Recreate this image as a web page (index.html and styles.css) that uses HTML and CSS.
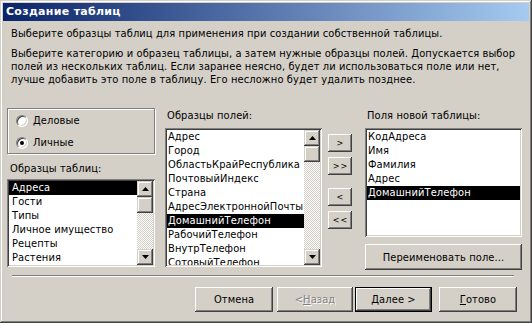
FILE: index.html
```html
<!DOCTYPE html>
<html lang="ru">
<head>
<meta charset="utf-8">
<title>Создание таблиц</title>
<link rel="stylesheet" href="styles.css">
</head>
<body>
<div class="window">
  <div class="titlebar">Создание таблиц</div>
  <p class="intro">Выберите образцы таблиц для применения при создании собственной таблицы.</p>
  <p class="desc"><span>Выберите категорию и образец таблицы, а затем нужные образцы полей. Допускается выбор</span><span>полей из нескольких таблиц. Если заранее неясно, будет ли использоваться поле или нет,</span><span>лучше добавить это поле в таблицу. Его несложно будет удалить позднее.</span></p>
  <div class="main">
    <div class="col col1">
      <div class="groupbox">
        <label class="radio-row"><span class="radio"></span>Деловые</label>
        <label class="radio-row"><span class="radio checked"></span>Личные</label>
      </div>
      <div class="label label1">Образцы таблиц:</div>
      <div class="listbox list1">
        <ul class="items">
          <li class="sel">Адреса</li>
          <li>Гости</li>
          <li>Типы</li>
          <li>Личное имущество</li>
          <li>Рецепты</li>
          <li>Растения</li>
        </ul>
        <div class="scrollbar">
          <div class="sbtn"><svg width="7" height="4" viewBox="0 0 7 4"><polygon points="3.5,0 7,4 0,4" fill="#000"/></svg></div>
          <div class="sbtn thumb"></div>
          <div class="track"></div>
          <div class="sbtn"><svg width="7" height="4" viewBox="0 0 7 4"><polygon points="0,0 7,0 3.5,4" fill="#000"/></svg></div>
        </div>
      </div>
    </div>
    <div class="col col2">
      <div class="label">Образцы полей:</div>
      <div class="listbox list2">
        <ul class="items">
          <li>Адрес</li>
          <li>Город</li>
          <li>ОбластьКрайРеспублика</li>
          <li>ПочтовыйИндекс</li>
          <li>Страна</li>
          <li>АдресЭлектроннойПочты</li>
          <li class="sel">ДомашнийТелефон</li>
          <li>РабочийТелефон</li>
          <li>ВнутрТелефон</li>
          <li>СотовыйТелефон</li>
        </ul>
        <div class="scrollbar">
          <div class="sbtn"><svg width="7" height="4" viewBox="0 0 7 4"><polygon points="3.5,0 7,4 0,4" fill="#000"/></svg></div>
          <div class="sbtn thumb"></div>
          <div class="track"></div>
          <div class="sbtn"><svg width="7" height="4" viewBox="0 0 7 4"><polygon points="0,0 7,0 3.5,4" fill="#000"/></svg></div>
        </div>
      </div>
    </div>
    <div class="col arrows">
      <button class="btn mini b1">&gt;</button>
      <button class="btn mini b2">&gt;&gt;</button>
      <button class="btn mini b3">&lt;</button>
      <button class="btn mini b4">&lt;&lt;</button>
    </div>
    <div class="col col3">
      <div class="label">Поля новой таблицы:</div>
      <div class="listbox list3">
        <ul class="items">
          <li>КодАдреса</li>
          <li>Имя</li>
          <li>Фамилия</li>
          <li>Адрес</li>
          <li class="sel">ДомашнийТелефон</li>
        </ul>
      </div>
      <button class="btn rename">Переименовать поле...</button>
    </div>
  </div>
  <div class="separator"></div>
  <div class="footer">
    <button class="btn fbtn cancel">Отмена</button>
    <button class="btn fbtn back disabled">&lt; <u>Н</u>азад</button>
    <button class="btn fbtn next default"><u>Д</u>алее &gt;</button>
    <button class="btn fbtn finish"><u>Г</u>отово</button>
  </div>
</div>
</body>
</html>
```
FILE: styles.css
```css
* { box-sizing: border-box; }
html, body { margin: 0; padding: 0; background: #d4d0c8; }
body {
  font-family: "DejaVu Sans Condensed", "DejaVu Sans", sans-serif;
  font-size: 11px;
  letter-spacing: 0.1px;
  color: #000;
}
.window {
  width: 532px;
  height: 323px;
  padding: 3px;
  background: #d4d0c8;
  box-shadow: inset -1px -1px #404040, inset 1px 1px #d4d0c8, inset -2px -2px #808080, inset 2px 2px #fff;
  display: flex;
  flex-direction: column;
  overflow: hidden;
}
.titlebar {
  height: 18px;
  line-height: 18px;
  padding-left: 3px;
  background: linear-gradient(to right, #0a246a, #a6caf0);
  color: #fff;
  font-family: "DejaVu Sans", sans-serif;
  font-weight: bold;
  font-size: 11px;
  letter-spacing: 0.3px;
  flex: none;
}
.intro, .desc {
  margin: 0 0 0 8px;
  line-height: 13px;
  white-space: nowrap;
}
.intro { margin-top: 6px; }
.desc { margin-top: 7px; }
.desc span { display: block; }

.main {
  margin: 22px 0 0 4px;
  height: 163px;
  display: flex;
  flex: none;
}
.col { display: flex; flex-direction: column; }
.col1 { width: 148px; }
.col2 { width: 157px; margin-left: 10px; }
.arrows { width: 24px; margin-left: 6px; padding-top: 26px; }
.col3 { width: 157px; margin-left: 13px; }

.groupbox {
  height: 46px;
  border: 1px solid #808080;
  box-shadow: inset 1px 1px #fff, 1px 1px #fff;
  padding: 5px 0 0 8px;
  display: flex;
  flex-direction: column;
  gap: 9px;
}
.radio-row {
  display: flex;
  align-items: center;
  height: 13px;
  gap: 5px;
}
.radio {
  width: 12px;
  height: 12px;
  border-radius: 50%;
  background: #fff;
  border: 1px solid;
  border-color: #808080 #fff #fff #808080;
  box-shadow: inset 1px 1px #404040, inset -1px -1px #d4d0c8;
  position: relative;
  flex: none;
}
.radio.checked::after {
  content: "";
  position: absolute;
  left: 3px;
  top: 3px;
  width: 4px;
  height: 4px;
  border-radius: 50%;
  background: #000;
}

.label {
  height: 13px;
  line-height: 13px;
  padding-left: 2px;
  margin-top: 1px;
  white-space: nowrap;
}
.label1 { margin-top: 8px; padding-left: 3px; }

.listbox {
  background: #fff;
  padding: 2px;
  box-shadow: inset 1px 1px #808080, inset -1px -1px #fff, inset 2px 2px #404040, inset -2px -2px #d4d0c8;
  display: flex;
  overflow: hidden;
}
.list1 { height: 88px; margin-top: 4px; }
.list2 { height: 139px; margin-top: 6px; }
.list3 { height: 109px; margin-top: 6px; }

.items {
  list-style: none;
  margin: 0;
  padding: 0;
  flex: 1;
  overflow: hidden;
  min-width: 0;
}
.items li {
  height: 14px;
  line-height: 14px;
  padding-left: 1px;
  white-space: nowrap;
}
.list1 .items li { padding-left: 3px; }
.items li.sel { background: #000; color: #fff; }

.scrollbar {
  width: 16px;
  display: flex;
  flex-direction: column;
  flex: none;
}
.sbtn {
  height: 16px;
  flex: none;
  background: #d4d0c8;
  box-shadow: inset -1px -1px #404040, inset 1px 1px #d4d0c8, inset -2px -2px #808080, inset 2px 2px #fff;
  display: flex;
  align-items: center;
  justify-content: center;
}
.sbtn svg { display: block; }
.track {
  flex: 1;
  background: repeating-conic-gradient(#fff 0 25%, #d4d0c8 0 50%) 0 0 / 2px 2px;
}

.btn {
  font: inherit;
  letter-spacing: inherit;
  color: #000;
  background: #d4d0c8;
  border: none;
  padding: 0;
  margin: 0;
  box-shadow: inset -1px -1px #404040, inset 1px 1px #fff, inset -2px -2px #808080, inset 2px 2px #d4d0c8;
  display: flex;
  align-items: center;
  justify-content: center;
  white-space: nowrap;
}
.mini {
  width: 24px;
  height: 18px;
  font-size: 9px;
  letter-spacing: 1px;
  padding-left: 1px;
}
.b2 { margin-top: 5px; }
.b3 { margin-top: 13px; }
.b4 { margin-top: 5px; }
.rename {
  width: 157px;
  height: 26px;
  margin-top: 7px;
}

.separator {
  margin: 4px 15px 0 9px;
  height: 2px;
  border-top: 1px solid #808080;
  border-bottom: 1px solid #fff;
  flex: none;
}
.footer {
  margin-top: 10px;
  display: flex;
  padding-left: 192px;
  flex: none;
}
.fbtn { height: 25px; }
.cancel { width: 78px; }
.back { width: 76px; margin-left: 4px; }
.next { width: 77px; margin-left: 2px; }
.finish { width: 78px; margin-left: 7px; }
.btn u { text-decoration: underline; }
.disabled { color: #808080; text-shadow: 1px 1px #fff; }
.default {
  box-shadow: inset 0 0 0 1px #000, inset -2px -2px #404040, inset 2px 2px #fff, inset -3px -3px #808080, inset 3px 3px #d4d0c8;
}
```
